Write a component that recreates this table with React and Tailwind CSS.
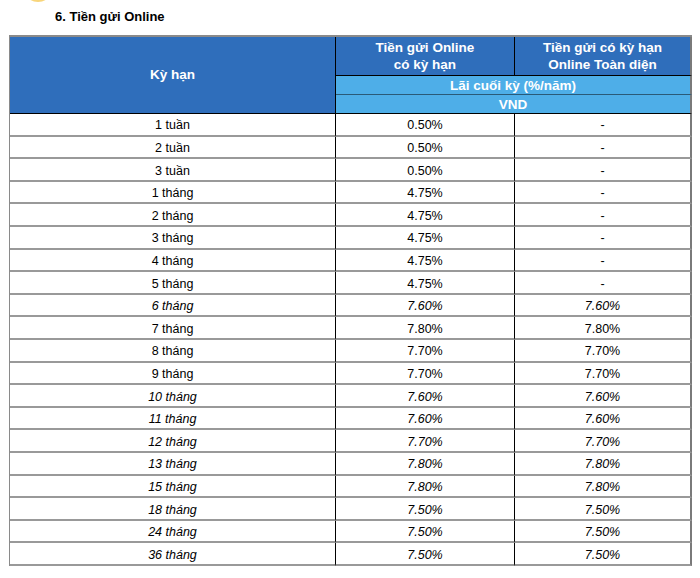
const rows = [
  ["1 tuần", "0.50%", "-", false],
  ["2 tuần", "0.50%", "-", false],
  ["3 tuần", "0.50%", "-", false],
  ["1 tháng", "4.75%", "-", false],
  ["2 tháng", "4.75%", "-", false],
  ["3 tháng", "4.75%", "-", false],
  ["4 tháng", "4.75%", "-", false],
  ["5 tháng", "4.75%", "-", false],
  ["6 tháng", "7.60%", "7.60%", true],
  ["7 tháng", "7.80%", "7.80%", false],
  ["8 tháng", "7.70%", "7.70%", false],
  ["9 tháng", "7.70%", "7.70%", false],
  ["10 tháng", "7.60%", "7.60%", true],
  ["11 tháng", "7.60%", "7.60%", true],
  ["12 tháng", "7.70%", "7.70%", true],
  ["13 tháng", "7.80%", "7.80%", true],
  ["15 tháng", "7.80%", "7.80%", true],
  ["18 tháng", "7.50%", "7.50%", true],
  ["24 tháng", "7.50%", "7.50%", true],
  ["36 tháng", "7.50%", "7.50%", true],
];

function App() {
  return (
    <div className="relative w-[700px] h-[578px] overflow-hidden bg-white font-['Liberation_Sans',Arial,sans-serif] text-black">
      {/* góc logo bị cắt phía trên */}
      <div className="absolute left-[23px] top-[-28px] w-[30px] h-[30px] rounded-full bg-[#f5c342] opacity-70" />

      <h2 className="pl-[55px] pt-[9px] text-[13px] leading-[16px] font-bold">
        6. Tiền gửi Online
      </h2>

      <div className="mt-[10px] ml-[9px] w-fit border-l border-t-2 border-[#8a8a8a]">
        {/* Header */}
        <div className="flex">
          <div className="w-[326px] h-[77px] flex items-center justify-center bg-[#2f6ebb] border-r border-b border-black text-white font-bold text-[13.5px]">
            Kỳ hạn
          </div>
          <div className="flex flex-col">
            <div className="flex h-[39px]">
              <div className="w-[179px] flex items-center justify-center text-center bg-[#2f6ebb] border-r border-b border-black text-white font-bold text-[13.5px] leading-[17px]">
                Tiền gửi Online
                <br />
                có kỳ hạn
              </div>
              <div className="w-[177px] flex items-center justify-center text-center bg-[#2f6ebb] border-r-2 border-r-[#7a7a7a] border-b border-b-black text-white font-bold text-[13.5px] leading-[17px]">
                Tiền gửi có kỳ hạn
                <br />
                Online Toàn diện
              </div>
            </div>
            <div className="h-[19px] pt-[2px] flex items-center justify-center bg-[#4eaee8] border-b border-b-[#2a5a78] border-r-2 border-r-[#7a7a7a] text-white font-bold text-[13.5px]">
              Lãi cuối kỳ (%/năm)
            </div>
            <div className="h-[19px] pt-[2px] flex items-center justify-center bg-[#4eaee8] border-b border-b-black border-r-2 border-r-[#7a7a7a] text-white font-bold text-[13.5px]">
              VND
            </div>
          </div>
        </div>

        {/* Body */}
        {rows.map(([term, a, b, italic]) => (
          <div key={term} className={`flex h-[22.6px] text-[12.5px] ${italic ? "italic" : ""}`}>
            <div className="w-[326px] pt-[3px] flex items-center justify-center border-r border-r-black border-b-2 border-b-[#999999]">
              {term}
            </div>
            <div className="w-[179px] pt-[3px] flex items-center justify-center border-r border-r-black border-b-2 border-b-[#999999]">
              {a}
            </div>
            <div className="w-[177px] pt-[3px] flex items-center justify-center border-r-2 border-r-[#7a7a7a] border-b-2 border-b-[#999999]">
              {b}
            </div>
          </div>
        ))}
      </div>
    </div>
  );
}

export default App;
